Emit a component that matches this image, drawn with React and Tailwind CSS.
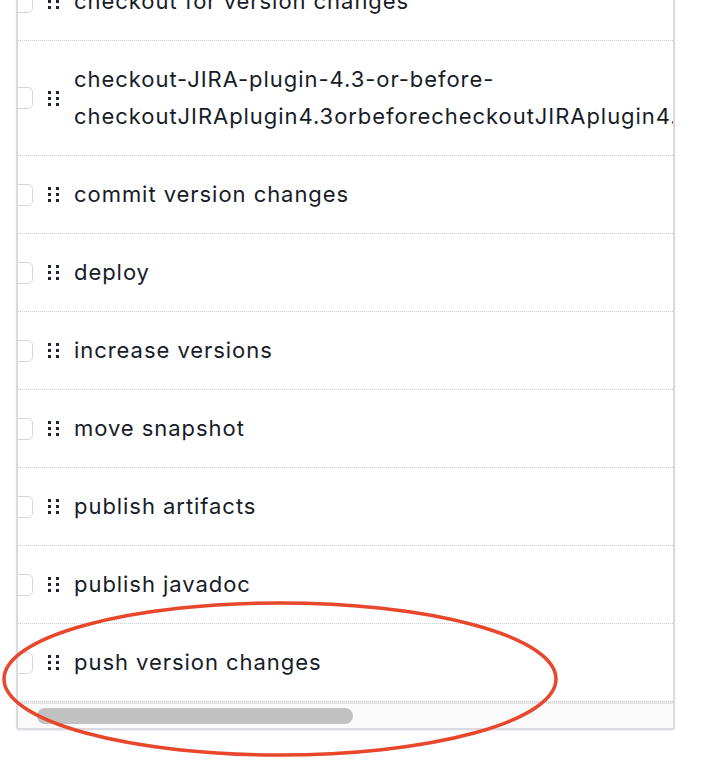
import React from "react";

const steps = [
  ["checkout for version changes"],
  ["checkout-JIRA-plugin-4.3-or-before-", "checkoutJIRAplugin4.3orbeforecheckoutJIRAplugin4.3orbefore"],
  ["commit version changes"],
  ["deploy"],
  ["increase versions"],
  ["move snapshot"],
  ["publish artifacts"],
  ["publish javadoc"],
  ["push version changes"],
];

function DragHandle() {
  return (
    <div className="grid grid-cols-2 gap-x-[5px] gap-y-[3px] shrink-0">
      {[0, 1, 2, 3, 4, 5].map((i) => (
        <span key={i} className="block w-[3px] h-[3px] bg-[#1f2533]" />
      ))}
    </div>
  );
}

function StepRow({ lines }) {
  return (
    <div className="flex items-center py-5 border-b border-dotted border-[#c6c9cf]">
      <span className="w-[22px] h-[22px] shrink-0 rounded-[5px] border border-[#d4d7dd] bg-white" />
      <div className="ml-[15px] mr-[15px]">
        <DragHandle />
      </div>
      <div className="text-[22px] leading-[37px] tracking-[0.95px] text-[#161c28] whitespace-nowrap">
        {lines.map((l, i) => (
          <div key={i}>{l}</div>
        ))}
      </div>
    </div>
  );
}

export default function App() {
  return (
    <div className="relative h-[768px] overflow-hidden bg-white" style={{ fontFamily: "Inter, 'Noto Sans', sans-serif" }}>
      <div className="ml-4 w-[659px] -mt-[37px] border-2 border-[#d9dbe0] border-t-0 rounded-b-[3px] bg-white shadow-[0_1px_2px_rgba(0,0,0,0.08)] overflow-hidden">
        <div className="-ml-[7px] w-[1370px]">
          {steps.map((lines, i) => (
            <StepRow key={i} lines={lines} />
          ))}
        </div>
        <div className="border-t-2 border-[#e6e6e6] bg-[#fafafa] h-[26px] flex items-center pl-[19px]">
          <div className="w-[316px] h-[16px] rounded-full bg-[#c1c1c1]" />
        </div>
      </div>
      <svg className="absolute left-0 top-0 pointer-events-none" width="702" height="768">
        <ellipse cx="280" cy="679" rx="276" ry="76" fill="none" stroke="#e8472b" strokeWidth="3.5" />
      </svg>
    </div>
  );
}
